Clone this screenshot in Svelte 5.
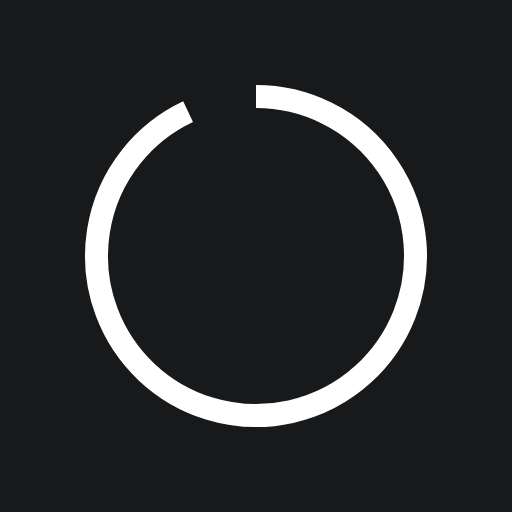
<script>
  // ring with a small gap near the top, angles in degrees from 12 o'clock
  const radius = 159.5
  const gap = 25.2
  const rad = (gap * Math.PI) / 180
  const endX = 256 - radius * Math.sin(rad)
  const endY = 256 - radius * Math.cos(rad)
  const d = `M256 ${256 - radius} A${radius} ${radius} 0 1 1 ${endX} ${endY}`
</script>

<main class="screen">
  <svg class="ring" viewBox="0 0 512 512" width="512" height="512" aria-label="Loading">
    <path {d} fill="none" stroke="#fff" stroke-width="23" />
  </svg>
</main>

<style>
  :global(body) {
    margin: 0;
    background: #18191b;
  }
  .screen {
    width: 512px;
    height: 512px;
    background: #18191b;
  }
  .ring {
    display: block;
  }
</style>
